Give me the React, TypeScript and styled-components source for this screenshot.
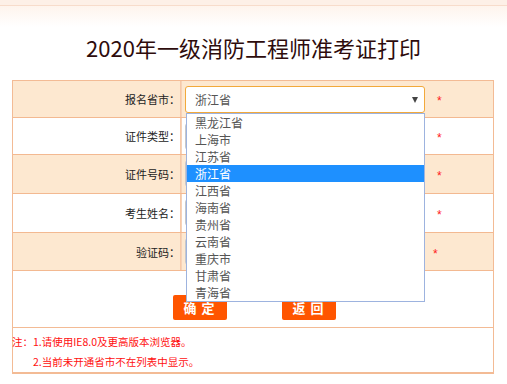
import styled, { createGlobalStyle } from 'styled-components';

const GlobalStyle = createGlobalStyle`
	body {
		margin: 0;
		background: #fff;
		font-family: "Noto Sans CJK SC", "Noto Sans", sans-serif;
	}
`;

const provinces = ['黑龙江省', '上海市', '江苏省', '浙江省', '江西省', '海南省', '贵州省', '云南省', '重庆市', '甘肃省', '青海省'];

const fields = [
	{ label: '报名省市：', h: 37, peach: true, input: 'select' },
	{ label: '证件类型：', h: 37, peach: false, input: 'select' },
	{ label: '证件号码：', h: 39, peach: true, input: 'text' },
	{ label: '考生姓名：', h: 39, peach: false, input: 'text' },
	{ label: '验证码：', h: 38, peach: true, input: 'code' },
];

const App = () => {
	return (
		<SPage>
			<GlobalStyle />
			<div className='top'>
				<div className='top__strip' />
				<div className='top__fade' />
			</div>
			<Title>2020年一级消防工程师准考证打印</Title>
			<Form>
				{fields.map((f, i) => (
					<Row key={f.label} $h={f.h} $peach={f.peach}>
						<Label>{f.label}</Label>
						<Cell>
							{f.input === 'select' && i === 0 && (
								<SelectBox>
									<span>浙江省</span>
									<Arrow />
								</SelectBox>
							)}
							{f.input === 'select' && i !== 0 && <InputBox $w={240} />}
							{f.input === 'text' && <InputBox $w={240} $top={-1} />}
							{f.input === 'code' && <InputBox $w={237} />}
							<Star $shift={f.input === 'code' ? 11 : 12}>*</Star>
						</Cell>
					</Row>
				))}
				<ButtonRow>
					<Button>确 定</Button>
					<Button>返 回</Button>
				</ButtonRow>
				<Notes>
					<p>注：1.请使用IE8.0及更高版本浏览器。</p>
					<p className='indent'>2.当前未开通省市不在列表中显示。</p>
				</Notes>
				<Dropdown>
					{provinces.map((p) => (
						<Option key={p} $active={p === '浙江省'}>
							{p}
						</Option>
					))}
				</Dropdown>
			</Form>
		</SPage>
	);
};

export default App;

const SPage = styled.div`
	width: 507px;
	height: 384px;
	overflow: hidden;

	.top__strip {
		height: 5px;
		background: #fdf0e7;
		border-bottom: 1px solid #f7dccb;
	}
	.top__fade {
		height: 21px;
		background: linear-gradient(#fef4ed, #ffffff);
	}
`;

const Title = styled.h1`
	margin: 0 0 13px;
	height: 40px;
	line-height: 40px;
	text-align: center;
	font-size: 22px;
	font-weight: 400;
	color: #2e0c0c;
`;

const Form = styled.div`
	position: relative;
	width: 480px;
	margin-left: 12px;
	border: 1px solid #f3bb95;
	border-bottom-width: 2px;
`;

const Row = styled.div<{ $h: number; $peach: boolean }>`
	display: grid;
	grid-template-columns: 168px 1fr;
	height: ${(p) => p.$h}px;
	background: ${(p) => (p.$peach ? '#fde8d0' : '#ffffff')};
	border-bottom: 1px solid #f3b991;
	box-sizing: border-box;
`;

const Label = styled.div`
	display: flex;
	align-items: center;
	justify-content: flex-end;
	padding-right: 0;
	font-size: 11px;
	color: #222;
	border-right: 1px solid #f6c9a8;
`;

const Cell = styled.div`
	display: flex;
	align-items: center;
	padding-left: 3px;
	border-left: 1px solid #f6d2b8;
`;

const SelectBox = styled.div`
	position: relative;
	box-sizing: border-box;
	width: 240px;
	height: 27px;
	margin-top: 1px;
	display: flex;
	align-items: center;
	padding-left: 9px;
	background: #fff;
	border: 1px solid #f2a93b;
	border-radius: 3px;
	font-size: 12px;
	color: #555;
`;

const Arrow = styled.i`
	position: absolute;
	right: 6px;
	top: 10px;
	width: 0;
	height: 0;
	border-left: 3px solid transparent;
	border-right: 3px solid transparent;
	border-top: 6px solid #444;
`;

const InputBox = styled.div<{ $w: number; $top?: number }>`
	box-sizing: border-box;
	width: ${(p) => p.$w}px;
	height: 27px;
	margin-top: ${(p) => p.$top ?? 0}px;
	background: #fff;
	border: 1px solid #c8c8c8;
	border-radius: 3px;
`;

const Star = styled.span<{ $shift: number }>`
	margin-left: ${(p) => p.$shift}px;
	margin-top: 4px;
	color: #ff1a1a;
	font-size: 12px;
	font-family: "Liberation Sans", sans-serif;
`;

const ButtonRow = styled.div`
	display: flex;
	justify-content: center;
	gap: 55px;
	height: 57px;
	padding: 24px 0 0 2px;
	box-sizing: border-box;
	border-bottom: 1px solid #f3bb95;
`;

const Button = styled.button`
	width: 54px;
	height: 25px;
	padding: 0;
	border: none;
	border-radius: 2px;
	background: #ff5500;
	color: #fff;
	font-family: "Noto Sans CJK SC", sans-serif;
	font-size: 13px;
	font-weight: 700;
	letter-spacing: 1px;
`;

const Notes = styled.div`
	height: 44px;
	padding-top: 4px;
	box-sizing: border-box;

	p {
		margin: 0;
		height: 20px;
		line-height: 20px;
		font-size: 10.5px;
		color: #ff1010;
		margin-left: -1px;
	}
	.indent {
		padding-left: 21px;
	}
`;

const Dropdown = styled.div`
	position: absolute;
	left: 173px;
	top: 32px;
	width: 239px;
	box-sizing: border-box;
	background: #fff;
	border: 1px solid #9db3df;
`;

const Option = styled.div<{ $active: boolean }>`
	height: 17px;
	line-height: 17px;
	padding-left: 8px;
	font-size: 12px;
	color: ${(p) => (p.$active ? '#fff' : '#555')};
	background: ${(p) => (p.$active ? '#1e90ff' : 'transparent')};
`;
